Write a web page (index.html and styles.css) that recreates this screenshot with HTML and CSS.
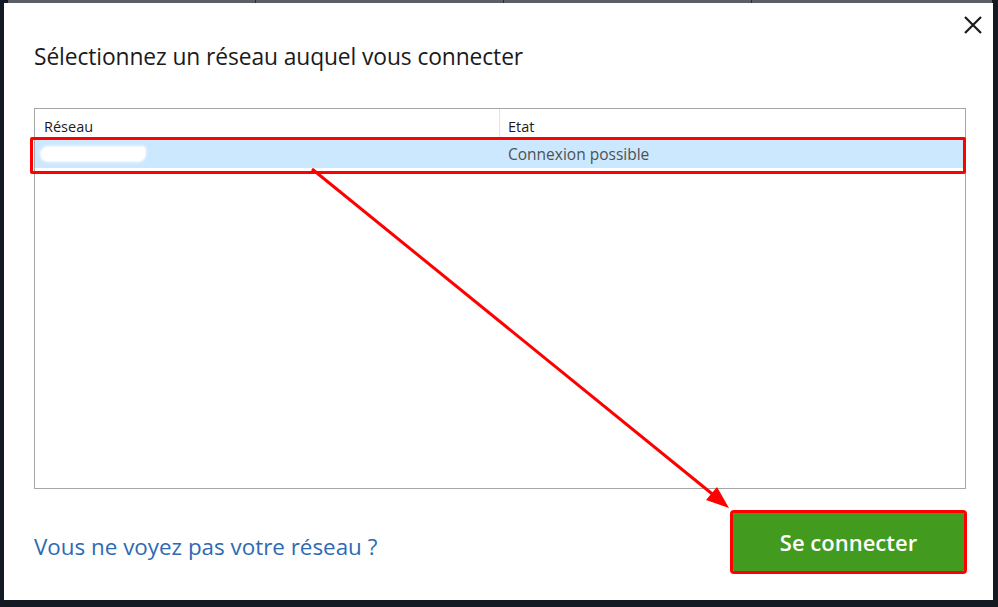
FILE: index.html
```html
<!DOCTYPE html>
<html lang="fr">
<head>
<meta charset="utf-8">
<title>Se connecter</title>
<link rel="stylesheet" href="styles.css">
</head>
<body>
<div class="topbar">
  <span class="seg"></span><span class="seg"></span><span class="seg"></span><span class="seg last"></span>
</div>
<div class="dialog">
  <div class="head">
    <button class="close" aria-label="Fermer">
      <svg width="20" height="20" viewBox="0 0 20 20"><path d="M2 2 L18 18 M18 2 L2 18" stroke="#1a1a1a" stroke-width="2.2" fill="none"/></svg>
    </button>
  </div>
  <h1 class="title">Sélectionnez un réseau auquel vous connecter</h1>
  <div class="list">
    <div class="list-head">
      <div class="col c1">Réseau</div>
      <div class="col c2">Etat</div>
    </div>
    <div class="row selected">
      <div class="col c1"><span class="blur"></span></div>
      <div class="col c2">Connexion possible</div>
    </div>
  </div>
  <div class="footer">
    <a class="link" href="#">Vous ne voyez pas votre réseau ?</a>
    <button class="connect">Se connecter</button>
  </div>
  <div class="mark-row"></div>
  <svg class="arrow" width="998" height="607" viewBox="0 0 998 607">
    <line x1="312" y1="169" x2="716" y2="497" stroke="#ff0000" stroke-width="3"/>
    <polygon points="729,508 706,500 717,487" fill="#ff0000"/>
  </svg>
</div>
</body>
</html>
```
FILE: styles.css
```css
* { box-sizing: border-box; }
html, body { margin: 0; padding: 0; }
body {
  width: 998px;
  height: 607px;
  background: #131a23;
  font-family: "Open Sans", "Noto Sans", sans-serif;
  overflow: hidden;
}
.topbar {
  display: flex;
  height: 3px;
  margin: 0 6px 0 8px;
  background: #5b5f65;
}
.seg {
  width: 248px;
  border-right: 1px solid #2a2e33;
}
.seg.last { flex: 1; border-right: 0; }
.dialog {
  position: relative;
  margin: 0 5px 0 4px;
  height: 597px;
  background: #ffffff;
  padding: 0 27px 0 30px;
  display: flex;
  flex-direction: column;
}
.head {
  display: flex;
  justify-content: flex-end;
  height: 34px;
  margin-right: -19px;
  padding-top: 10px;
}
.close {
  width: 24px;
  height: 24px;
  padding: 2px;
  border: 0;
  background: transparent;
}
.title {
  margin: 5px 0 0 0;
  font-size: 22.8px;
  font-weight: 400;
  line-height: 30px;
  color: #1b1b1b;
  letter-spacing: -0.1px;
}
.list {
  margin-top: 36px;
  height: 381px;
  border: 1px solid #a6a6a6;
  font-size: 15.5px;
}
.list-head {
  display: flex;
  height: 30px;
  color: #1b1b1b;
  font-size: 14.5px;
}
.list-head .c1 { border-right: 1px solid #e3e3e3; }
.row {
  display: flex;
  height: 29px;
  color: #505050;
}
.selected { background: #cce8ff; }
.col { display: flex; align-items: flex-end; padding-bottom: 3px; }
.row .col { align-items: center; padding-bottom: 0; }
.c1 { width: 465px; padding-left: 9px; }
.c2 { flex: 1; padding-left: 8px; }
.blur {
  display: block;
  width: 104px;
  height: 14px;
  margin-left: -3px;
  margin-top: 1px;
  background: #ffffff;
  border-radius: 7px 3px 7px 7px;
  box-shadow: 0 0 3px 1px #ffffff;
}
.footer {
  display: flex;
  justify-content: space-between;
  align-items: center;
  margin-top: 24px;
}
.link {
  color: #2e6ab3;
  text-decoration: none;
  font-size: 22.4px;
  margin-top: 8px;
}
.connect {
  width: 231px;
  height: 58px;
  margin-right: 2px;
  border: 0;
  border-radius: 1px;
  background: #429a1e;
  color: #ffffff;
  font-family: inherit;
  font-size: 22px;
  font-weight: 600;
  outline: 3px solid #ff0000;
  outline-offset: 0;
}
.mark-row {
  position: absolute;
  left: 26px;
  top: 134px;
  width: 936px;
  height: 37px;
  border: 3px solid #ff0000;
  border-radius: 2px;
}
.arrow {
  position: absolute;
  left: -4px;
  top: -3px;
  pointer-events: none;
}
```
